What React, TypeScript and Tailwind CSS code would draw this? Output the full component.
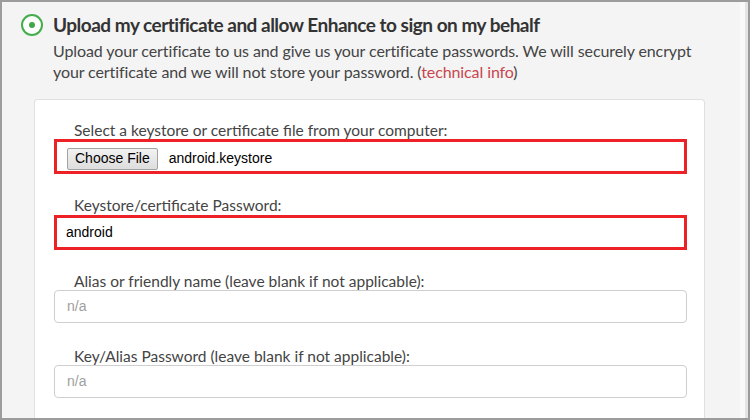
import React from "react";

const lato = { fontFamily: "Lato, 'Open Sans', sans-serif" } as React.CSSProperties;

function Label({ children }: { children: React.ReactNode }) {
  return (
    <div className="pl-[20px] text-[15.5px] leading-[18px] text-[#444]" style={lato}>
      {children}
    </div>
  );
}

function PlainInput() {
  return (
    <div className="flex h-[33px] items-center rounded-[4px] border border-[#cfcfcf] bg-white pl-[12px] text-[14px] text-[#a0a0a0] font-['Liberation_Sans',Arial,sans-serif]">
      n/a
    </div>
  );
}

export default function App() {
  return (
    <div className="flex h-[420px] w-[750px] overflow-hidden border-2 border-[#9c9c9c] bg-[#f4f4f4]">
      <div className="flex w-[738px] flex-col pt-[9px]">
        <div className="flex gap-[10px] pl-[19px]">
          <div className="mt-[3px] flex h-[22px] w-[22px] shrink-0 items-center justify-center rounded-full border-2 border-[#45ad4b] bg-white">
            <div className="h-[6px] w-[6px] rounded-full bg-[#3fa845]" />
          </div>
          <div className="flex flex-col">
            <div className="text-[19px] font-bold leading-[28px] tracking-[-0.5px] text-[#333]" style={lato}>
              Upload my certificate and allow Enhance to sign on my behalf
            </div>
            <p className="mt-[1px] w-[662px] text-[16px] leading-[21px] tracking-[-0.1px] text-[#444]" style={lato}>
              {"Upload your certificate to us and give us your certificate passwords. We will securely encrypt your certificate and we will not store your password. ("}
              <span className="text-[#c8464e]">technical info</span>
              {")"}
            </p>
          </div>
        </div>
        <div className="ml-[32px] mt-[17px] w-[671px] flex-1 rounded-t-[4px] border border-b-0 border-[#e0e0e0] bg-white pl-[19px] pr-[17px] pt-[21px]">
          <div className="mb-[22px]">
            <Label>Select a keystore or certificate file from your computer:</Label>
            <div className="flex h-[35px] items-center gap-[11px] border-[3px] border-[#ec2227] bg-white pl-[10px] pt-[4px] font-['Liberation_Sans',Arial,sans-serif]">
              <div className="flex h-[22px] items-center rounded-[2px] border border-[#a3a3a3] bg-gradient-to-b from-[#f2f2f2] to-[#dddddd] px-[7px] text-[14px] text-black">
                Choose File
              </div>
              <span className="text-[14px] text-black">android.keystore</span>
            </div>
          </div>
          <div className="mb-[22px]">
            <Label>Keystore/certificate Password:</Label>
            <div className="mt-[1px] flex h-[35px] items-center border-[3px] border-[#ec2227] bg-white pl-[9px] font-['Liberation_Sans',Arial,sans-serif] text-[14px] text-black">
              android
            </div>
          </div>
          <div className="mb-[24px]">
            <Label>Alias or friendly name (leave blank if not applicable):</Label>
            <PlainInput />
          </div>
          <div>
            <Label>Key/Alias Password (leave blank if not applicable):</Label>
            <PlainInput />
          </div>
        </div>
      </div>
      <div className="w-[5px] bg-[#fafafa]" />
      <div className="w-[3px] bg-[#e4e4e4]" />
    </div>
  );
}
